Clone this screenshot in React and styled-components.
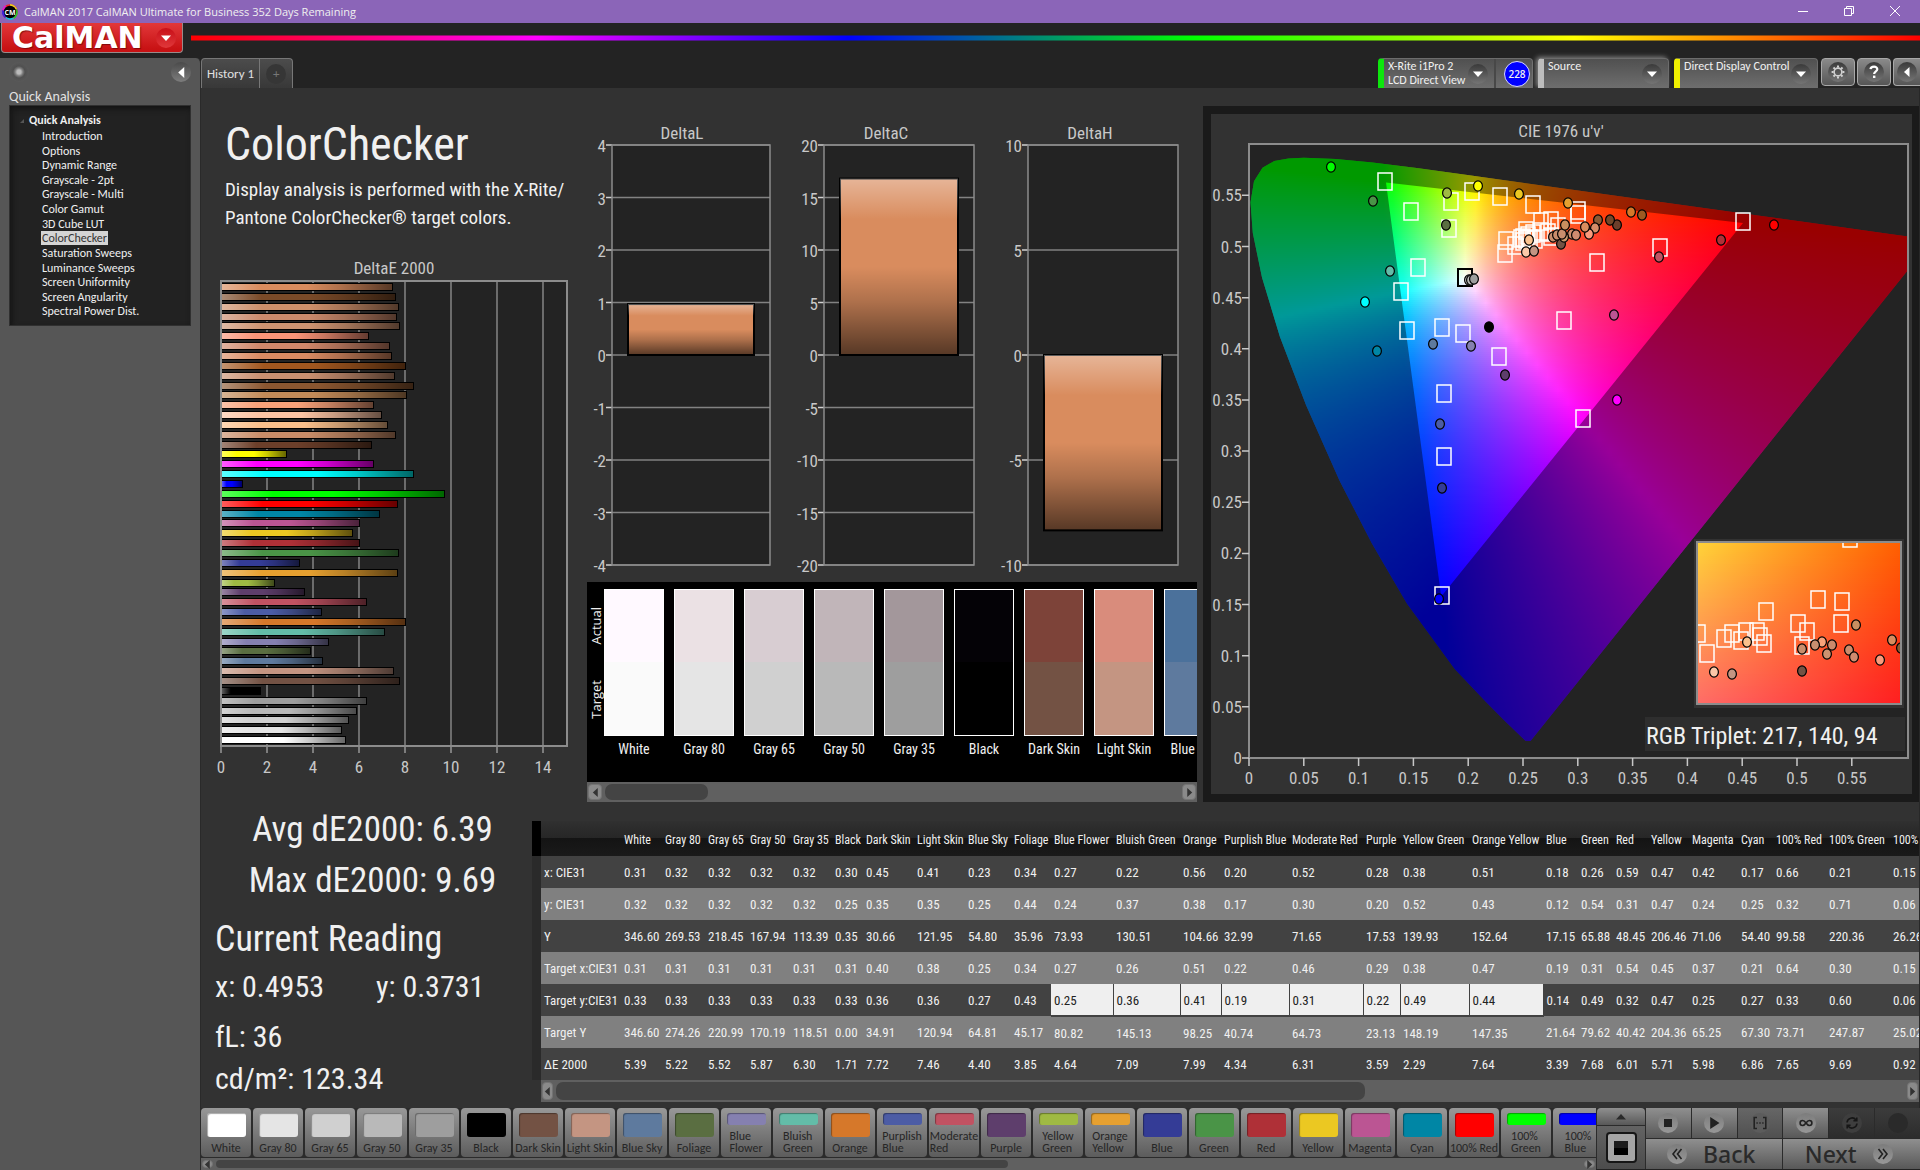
import React from "react";
import styled, { createGlobalStyle, css } from "styled-components";

const condensed = `"Roboto Condensed", "Open Sans", sans-serif`;
const ui = `Carlito, Calibri, Lato, sans-serif`;

/* ---------- data ---------- */

const steps = [
  "Introduction",
  "Options",
  "Dynamic Range",
  "Grayscale - 2pt",
  "Grayscale - Multi",
  "Color Gamut",
  "3D Cube LUT",
  "ColorChecker",
  "Saturation Sweeps",
  "Luminance Sweeps",
  "Screen Uniformity",
  "Screen Angularity",
  "Spectral Power Dist.",
];

// [dE2000, patch colour], top to bottom
const deltaE = [
  [7.45, "#d98c5e"],
  [7.58, "#7a4a28"],
  [7.7, "#cd8f6a"],
  [7.62, "#cb8a6c"],
  [7.75, "#cc9270"],
  [6.4, "#fa9478"],
  [7.32, "#d0876a"],
  [7.4, "#d98a62"],
  [8.0, "#a0561f"],
  [7.53, "#c98f70"],
  [8.36, "#8a5630"],
  [8.05, "#c28a58"],
  [6.6, "#f8a27a"],
  [6.97, "#fcc4a4"],
  [7.22, "#fbc08c"],
  [7.58, "#c88c68"],
  [6.53, "#6c3f2a"],
  [2.82, "#ffff00"],
  [6.61, "#ff00ff"],
  [8.36, "#00ffff"],
  [0.92, "#0000ff"],
  [9.69, "#00ff00"],
  [7.65, "#ff0000"],
  [6.86, "#0086a5"],
  [5.98, "#bb5593"],
  [5.71, "#ebc822"],
  [6.01, "#af3037"],
  [7.68, "#4a9447"],
  [3.39, "#343c96"],
  [7.64, "#e6a030"],
  [2.29, "#9fba43"],
  [3.59, "#5e3e6c"],
  [6.31, "#c15262"],
  [4.34, "#4c5ca5"],
  [7.99, "#d6782a"],
  [7.09, "#63bca8"],
  [4.64, "#8580b0"],
  [3.85, "#5a6e41"],
  [4.4, "#5e7a9e"],
  [7.46, "#c49582"],
  [7.72, "#735244"],
  [1.71, "#000000"],
  [6.3, "#9e9e9e"],
  [5.87, "#b9b9b9"],
  [5.52, "#d0d0d0"],
  [5.22, "#e5e5e5"],
  [5.39, "#ffffff"],
];

const deltaCharts = [
  { title: "DeltaL", max: 4, step: 1, value: 0.97, left: 21, inset: 16 },
  { title: "DeltaC", max: 20, step: 5, value: 16.8, left: 29, inset: 16 },
  { title: "DeltaH", max: 10, step: 5, value: -8.35, left: 29, inset: 16 },
];

const comparison = [
  { name: "White", actual: "#fff9ff", target: "#fafafa" },
  { name: "Gray 80", actual: "#ebe1e4", target: "#e5e5e5" },
  { name: "Gray 65", actual: "#d8cdd2", target: "#d0d0d0" },
  { name: "Gray 50", actual: "#c1b5b9", target: "#b9b9b9" },
  { name: "Gray 35", actual: "#a3979b", target: "#9e9e9e" },
  { name: "Black", actual: "#040206", target: "#000000" },
  { name: "Dark Skin", actual: "#7d4339", target: "#735244" },
  { name: "Light Skin", actual: "#d98c7c", target: "#c49582" },
  { name: "Blue Sky", actual: "#4b719b", target: "#5e7a9e" },
];

// name, column width, x, y, Y, target x, target y, target Y, dE
const readings = [
  ["White", 41, "0.31", "0.32", "346.60", "0.31", "0.33", "346.60", "5.39"],
  ["Gray 80", 43, "0.32", "0.32", "269.53", "0.31", "0.33", "274.26", "5.22"],
  ["Gray 65", 42, "0.32", "0.32", "218.45", "0.31", "0.33", "220.99", "5.52"],
  ["Gray 50", 43, "0.32", "0.32", "167.94", "0.31", "0.33", "170.19", "5.87"],
  ["Gray 35", 42, "0.32", "0.32", "113.39", "0.31", "0.33", "118.51", "6.30"],
  ["Black", 31, "0.30", "0.25", "0.35", "0.31", "0.33", "0.00", "1.71"],
  ["Dark Skin", 51, "0.45", "0.35", "30.66", "0.40", "0.36", "34.91", "7.72"],
  ["Light Skin", 51, "0.41", "0.35", "121.95", "0.38", "0.36", "120.94", "7.46"],
  ["Blue Sky", 46, "0.23", "0.25", "54.80", "0.25", "0.27", "64.81", "4.40"],
  ["Foliage", 40, "0.34", "0.44", "35.96", "0.34", "0.43", "45.17", "3.85"],
  ["Blue Flower", 62, "0.27", "0.24", "73.93", "0.27", "0.25", "80.82", "4.64"],
  ["Bluish Green", 67, "0.22", "0.37", "130.51", "0.26", "0.36", "145.13", "7.09"],
  ["Orange", 41, "0.56", "0.38", "104.66", "0.51", "0.41", "98.25", "7.99"],
  ["Purplish Blue", 68, "0.20", "0.17", "32.99", "0.22", "0.19", "40.74", "4.34"],
  ["Moderate Red", 74, "0.52", "0.30", "71.65", "0.46", "0.31", "64.73", "6.31"],
  ["Purple", 37, "0.28", "0.20", "17.53", "0.29", "0.22", "23.13", "3.59"],
  ["Yellow Green", 69, "0.38", "0.52", "139.93", "0.38", "0.49", "148.19", "2.29"],
  ["Orange Yellow", 74, "0.51", "0.43", "152.64", "0.47", "0.44", "147.35", "7.64"],
  ["Blue", 35, "0.18", "0.12", "17.15", "0.19", "0.14", "21.64", "3.39"],
  ["Green", 35, "0.26", "0.54", "65.88", "0.31", "0.49", "79.62", "7.68"],
  ["Red", 35, "0.59", "0.31", "48.45", "0.54", "0.32", "40.42", "6.01"],
  ["Yellow", 41, "0.47", "0.47", "206.46", "0.45", "0.47", "204.36", "5.71"],
  ["Magenta", 49, "0.42", "0.24", "71.06", "0.37", "0.25", "65.25", "5.98"],
  ["Cyan", 35, "0.17", "0.25", "54.40", "0.21", "0.27", "67.30", "6.86"],
  ["100% Red", 53, "0.66", "0.32", "99.58", "0.64", "0.33", "73.71", "7.65"],
  ["100% Green", 64, "0.21", "0.71", "220.36", "0.30", "0.60", "247.87", "9.69"],
  ["100% Blue", 60, "0.15", "0.06", "26.26", "0.15", "0.06", "25.02", "0.92"],
];
const rowLabels = [
  "x: CIE31",
  "y: CIE31",
  "Y",
  "Target x:CIE31",
  "Target y:CIE31",
  "Target Y",
  "ΔE 2000",
];
const isSelected = (row, col) => row === 4 && col >= 10 && col <= 17;

const patches = [
  ["White", "#ffffff"],
  ["Gray 80", "#e5e5e5"],
  ["Gray 65", "#d0d0d0"],
  ["Gray 50", "#b9b9b9"],
  ["Gray 35", "#9e9e9e"],
  ["Black", "#000000"],
  ["Dark Skin", "#735244"],
  ["Light Skin", "#c49582"],
  ["Blue Sky", "#5e7a9e"],
  ["Foliage", "#5a6e41"],
  ["Blue Flower", "#8580b0", true],
  ["Bluish Green", "#63bca8", true],
  ["Orange", "#d6782a"],
  ["Purplish Blue", "#4c5ca5", true],
  ["Moderate Red", "#c15262", true],
  ["Purple", "#5e3e6c"],
  ["Yellow Green", "#9fba43", true],
  ["Orange Yellow", "#e6a030", true],
  ["Blue", "#343c96"],
  ["Green", "#4a9447"],
  ["Red", "#af3037"],
  ["Yellow", "#ebc822"],
  ["Magenta", "#bb5593"],
  ["Cyan", "#0086a5"],
  ["100% Red", "#ff0000"],
  ["100% Green", "#00ff00", true],
  ["100% Blue", "#0000ff", true],
];

/* ---------- CIE chart data ---------- */

const U = 1096; // px per u'
const V = 1023; // px per v'
const PLOT_W = 659;
const PLOT_H = 614;
const px = (u) => u * U;
const py = (v) => PLOT_H - v * V;

const locus = [
  [0.2568, 0.0165], [0.2522, 0.0169], [0.2347, 0.035], [0.2161, 0.0549],
  [0.1877, 0.0871], [0.1441, 0.151], [0.112, 0.21], [0.0828, 0.2708],
  [0.052, 0.345], [0.0282, 0.4117], [0.0119, 0.4698], [0.0035, 0.5131],
  [0.0014, 0.5432], [0.0046, 0.5638], [0.0123, 0.577], [0.0231, 0.5837],
  [0.036, 0.5861], [0.0501, 0.5868], [0.0792, 0.5856], [0.1127, 0.5821],
  [0.1531, 0.5766], [0.2026, 0.5694], [0.2623, 0.5604], [0.3315, 0.5501],
  [0.4035, 0.5393], [0.4692, 0.5296], [0.5203, 0.5219], [0.583, 0.5125],
  [0.6234, 0.5065],
];
const gamut = [[0.4507, 0.5229], [0.125, 0.5625], [0.1754, 0.1579]];
const toPath = (pts) =>
  "M" + pts.map(([u, v]) => `${px(u).toFixed(1)} ${py(v).toFixed(1)}`).join("L") + "Z";

const targets = [
  [136, 37], [162, 67], [202, 57], [223, 47], [251, 52], [284, 60], [200, 84],
  [169, 123], [152, 147], [158, 186], [193, 183], [214, 189], [250, 212],
  [195, 249], [315, 176], [348, 118], [411, 103], [494, 77], [334, 274],
  [195, 312], [193, 451], [329, 66], [329, 70], [292, 77], [302, 76], [309, 82],
  [277, 86], [257, 96], [256, 109], [266, 101], [272, 94], [274, 93], [279, 91],
  [281, 94], [286, 95], [284, 89], [292, 87], [299, 88], [302, 92], [277, 95],
  [274, 97],
];
const measured = [
  [82, 23, "#00ff00"], [124, 57, "#4a9447"], [198, 49, "#9fba43"],
  [229, 42, "#ffff00"], [270, 50, "#ebc822"], [319, 59, "#e6a030"],
  [197, 81, "#5a6e41"], [141, 127, "#63bca8"], [116, 158, "#00ffff"],
  [128, 207, "#0086a5"], [184, 200, "#5e7a9e"], [222, 202, "#8580b0"],
  [256, 231, "#5e3e6c"], [240, 183, "#000000"], [365, 171, "#bb5593"],
  [368, 256, "#ff00ff"], [472, 96, "#af3037"], [525, 81, "#ff0000"],
  [410, 113, "#c15262"], [220, 136, "#d0d0d0"], [222, 136, "#b9b9b9"],
  [225, 135, "#9e9e9e"], [191, 280, "#4c5ca5"], [193, 344, "#343c96"],
  [190, 455, "#0000ff"], [382, 68, "#d6782a"], [393, 71, "#9c5a22"],
  [349, 76, "#8b5a35"], [368, 81, "#6b3f2b"], [361, 76, "#74482a"],
  [346, 84, "#d88d68"], [340, 90, "#fb9a7c"], [336, 83, "#d98c5e"],
  [323, 90, "#cd8c6c"], [327, 91, "#d08b6f"], [312, 100, "#735244"],
  [315, 93, "#cc9a6e"], [304, 93, "#c88e6c"], [308, 91, "#c98d6b"],
  [313, 90, "#c98e6d"], [316, 81, "#c88f60"], [277, 108, "#fcc8a8"],
  [285, 107, "#c49582"], [280, 96, "#fcc390"],
];

const insetTargets = [
  [153, -4], [121, 57], [145, 59], [69, 69], [101, 81], [144, 81], [110, 89],
  [105, 103], [1, 91], [10, 111], [27, 96], [35, 91], [44, 98], [49, 89],
  [60, 89], [63, 94], [67, 101],
];
const insetMeasured = [
  [159, 83, "#c88f60"], [195, 98, "#d98c5e"], [204, 106, "#8b5a35"],
  [183, 118, "#fb9a7c"], [152, 108, "#cd8c6c"], [157, 115, "#d08b6f"],
  [135, 103, "#cb8a6c"], [125, 100, "#f8a27a"], [118, 103, "#c98f70"],
  [130, 112, "#cc9270"], [105, 107, "#c88e6c"], [105, 129, "#735244"],
  [50, 100, "#fbc08c"], [17, 130, "#fcc8a8"], [35, 132, "#c49582"],
];

// chromaticity to the brightest display colour that has it
const chromaColor = (x, y) => {
  const u = x / U;
  const v = Math.max((PLOT_H - y) / V, 0.01);
  const d = 6 * u - 16 * v + 12;
  const cx = (9 * u) / d;
  const cy = (4 * v) / d;
  const X = cx / cy;
  const Z = (1 - cx - cy) / cy;
  const lin = [
    3.2406 * X - 1.5372 - 0.4986 * Z,
    -0.9689 * X + 1.8758 + 0.0415 * Z,
    0.0557 * X - 0.204 + 1.057 * Z,
  ].map((c) => Math.max(c, 0));
  const top = Math.max(...lin);
  return lin.map((c) => Math.round(255 * Math.pow(c / top, 0.85)));
};

const corners = [[255, 212, 56], [255, 95, 0], [255, 108, 104], [255, 30, 32]];
const insetColor = (x, y) => {
  const s = x / 204;
  const t = y / 162;
  return [0, 1, 2].map((i) =>
    Math.round(
      (corners[0][i] * (1 - s) + corners[1][i] * s) * (1 - t) +
        (corners[2][i] * (1 - s) + corners[3][i] * s) * t
    )
  );
};

// Two-dimensional colour field, painted as thin rows of horizontal gradients.
const ColorField = ({ id, width, height, row, stops, color }) => {
  const rows = Array.from({ length: Math.ceil(height / row) }, (_, i) => i * row);
  return (
    <g shapeRendering="crispEdges">
      <defs>
        {rows.map((y) => (
          <linearGradient key={y} id={`${id}${y}`}>
            {Array.from({ length: stops + 1 }, (_, i) => (
              <stop
                key={i}
                offset={i / stops}
                stopColor={`rgb(${color((i / stops) * width, y + row / 2)})`}
              />
            ))}
          </linearGradient>
        ))}
      </defs>
      {rows.map((y) => (
        <rect key={y} y={y} width={width} height={row} fill={`url(#${id}${y})`} />
      ))}
    </g>
  );
};

const Markers = ({ squares, dots }) => (
  <>
    {squares.map(([x, y], i) => (
      <rect
        key={i}
        x={x - 7}
        y={y - 8}
        width="14"
        height="17"
        fill="none"
        stroke="#fff"
        strokeWidth="1.5"
      />
    ))}
    {dots.map(([x, y, c], i) => (
      <ellipse key={i} cx={x} cy={y} rx="4.4" ry="5.2" fill={c} stroke="#000" strokeWidth="1.2" />
    ))}
  </>
);

/* ---------- charts ---------- */

const ChartSvg = styled.svg`
  display: block;
  width: 100%;
  height: auto;
  font-family: ${condensed};
  font-size: 17px;
  fill: #c8c8c8;
`;

const CieChart = () => {
  const ticks = Array.from({ length: 12 }, (_, i) => i * 0.05);
  const label = (t) => String(Number(t.toFixed(2)));
  return (
    <ChartSvg viewBox="0 0 701 680" role="img" aria-label="CIE 1976 u'v' chart">
      <text x="350" y="23" textAnchor="middle">
        CIE 1976 u'v'
      </text>
      <g transform="translate(38 30)">
        <rect width={PLOT_W} height={PLOT_H} fill="#232323" />
        <clipPath id="locus">
          <path d={toPath(locus)} />
        </clipPath>
        <clipPath id="plot">
          <rect width={PLOT_W} height={PLOT_H} />
        </clipPath>
        <g clipPath="url(#plot)">
          <g clipPath="url(#locus)">
            <ColorField
              id="cie"
              width={PLOT_W}
              height={PLOT_H}
              row={2}
              stops={64}
              color={chromaColor}
            />
            <path
              d={`M0 0H${PLOT_W}V${PLOT_H}H0Z${toPath(gamut)}`}
              fillRule="evenodd"
              fill="#000"
              fillOpacity="0.4"
            />
          </g>
        </g>
        <rect width={PLOT_W} height={PLOT_H} fill="none" stroke="#8c8c8c" strokeWidth="2" />
        <Markers squares={targets} dots={[]} />
        <rect x="209" y="125" width="14" height="17" fill="none" stroke="#000" strokeWidth="2" />
        <Markers squares={[]} dots={measured} />
        {ticks.map((t) => (
          <g key={t}>
            <path
              d={`M-7 ${py(t)}H0M${px(t)} ${PLOT_H}V${PLOT_H + 8}`}
              stroke="#c8c8c8"
              strokeWidth="1.5"
            />
            <text x="-7" y={py(t) + 6} textAnchor="end">
              {label(t)}
            </text>
            <text x={px(t)} y={PLOT_H + 26} textAnchor="middle">
              {label(t)}
            </text>
          </g>
        ))}
        <g transform="translate(448 398)">
          <rect x="-3" y="-3" width="210" height="169" fill="#323232" />
          <clipPath id="inset">
            <rect width="204" height="162" />
          </clipPath>
          <g clipPath="url(#inset)">
            <ColorField
              id="zoom"
              width={204}
              height={162}
              row={2}
              stops={8}
              color={insetColor}
            />
            <Markers squares={insetTargets} dots={insetMeasured} />
          </g>
          <rect width="204" height="162" fill="none" stroke="#8c8c8c" strokeWidth="2" />
        </g>
        <rect x="396" y="573" width="260" height="34" fill="#2e2e2e" />
        <text x="397" y="600" fontSize="24" fill="#f0f0f0">
          RGB Triplet: 217, 140, 94
        </text>
      </g>
    </ChartSvg>
  );
};

const Shade = ({ id, vertical }) => (
  <linearGradient id={id} x2={vertical ? 0 : 1} y2={vertical ? 1 : 0}>
    <stop offset="0" stopColor="#fff" stopOpacity="0.36" />
    <stop offset="0.23" stopColor="#fff" stopOpacity="0" />
    <stop offset="0.5" stopColor="#000" stopOpacity="0" />
    <stop offset="0.7" stopColor="#000" stopOpacity="0.2" />
    <stop offset="1" stopColor="#000" stopOpacity="0.6" />
  </linearGradient>
);

const DeltaEChart = () => {
  const pitch = 463 / deltaE.length;
  return (
    <ChartSvg viewBox="0 0 374 526" role="img" aria-label="DeltaE 2000 chart">
      <defs>
        <Shade id="shadeH" />
      </defs>
      <text x="187" y="16" textAnchor="middle">
        DeltaE 2000
      </text>
      <rect x="14" y="23" width="346" height="465" fill="#232323" stroke="#8c8c8c" strokeWidth="2" />
      {[2, 4, 6, 8, 10, 12, 14].map((t) => (
        <path key={t} d={`M${14 + t * 23} 23v465`} stroke="#8c8c8c" strokeWidth="1.4" />
      ))}
      {deltaE.map(([value, color], i) => {
        const y = Math.round(25 + i * pitch);
        const width = Math.round(value * 23);
        return (
          <g key={i}>
            <rect x="15" y={y} width={width} height="8" fill="#000" />
            <rect x="15" y={y + 1} width={width - 1} height="6" fill={color} />
            <rect x="15" y={y + 1} width={width - 1} height="6" fill="url(#shadeH)" />
          </g>
        );
      })}
      {[0, 2, 4, 6, 8, 10, 12, 14].map((t) => (
        <g key={t}>
          <path d={`M${14 + t * 23} 489v6`} stroke="#c8c8c8" />
          <text x={14 + t * 23} y="515" textAnchor="middle">
            {t}
          </text>
        </g>
      ))}
    </ChartSvg>
  );
};

const DeltaChart = ({ title, max, step, value, left, inset }) => {
  const right = 179;
  const top = 25;
  const half = 210;
  const y = (v) => top + half - (v / max) * half;
  const ticks = [];
  for (let t = max; t >= -max; t -= step) ticks.push(t);
  const box = {
    x: left + inset,
    y: Math.min(y(0), y(value)),
    width: right - left - inset * 2,
    height: Math.abs(y(value) - y(0)),
  };
  return (
    <ChartSvg viewBox="0 0 180 462" role="img" aria-label={`${title} chart`}>
      <defs>
        <Shade id="shadeV" vertical />
      </defs>
      <text x="91" y="19" textAnchor="middle">
        {title}
      </text>
      <rect x={left} y={top} width={right - left} height={half * 2} fill="#232323" />
      {ticks.map((t) => (
        <g key={t}>
          <path d={`M${left} ${y(t)}H${right}`} stroke="#828282" strokeWidth="1.5" />
          <path d={`M${left - 6} ${y(t)}h6`} stroke="#d0d0d0" strokeWidth="1.5" />
          <text x={left - 6} y={y(t) + 7} textAnchor="end">
            {t}
          </text>
        </g>
      ))}
      <rect
        x={left}
        y={top}
        width={right - left}
        height={half * 2}
        fill="none"
        stroke="#8c8c8c"
        strokeWidth="1.5"
      />
      <rect {...box} fill="#d98c5e" stroke="#000" strokeWidth="2" />
      <rect {...box} fill="url(#shadeV)" />
    </ChartSvg>
  );
};

/* ---------- shared controls ---------- */

const Global = createGlobalStyle`
  * { box-sizing: border-box; }
  body {
    margin: 0;
    background: #232323;
    color: #f0f0f0;
    font-family: ${ui};
    font-size: 12px;
    overflow: hidden;
  }
  button { font: inherit; color: inherit; border: 0; padding: 0; background: none; }
  a { color: inherit; text-decoration: none; }
`;

const Disc = styled.span`
  display: flex;
  flex: none;
  align-items: center;
  justify-content: center;
  width: 20px;
  height: 20px;
  border-radius: 50%;
  background: ${({ $bg }) => $bg || "linear-gradient(#3a3a3a, #757575)"};
`;

const Arrow = ({ dir = "down", size = 10, color = "#fff" }) => {
  const turn = { down: 0, left: 90, up: 180, right: 270 }[dir];
  return (
    <svg width={size} height={size} viewBox="0 0 10 10" aria-hidden="true">
      <path d="M0 2.5H10L5 8Z" fill={color} transform={`rotate(${turn} 5 5)`} />
    </svg>
  );
};

const Scroll = styled.div`
  display: flex;
  align-items: stretch;
  gap: 3px;
  height: ${({ $h }) => $h}px;
  padding: 2px 1px;
  background: #606060;
`;
const ScrollEnd = styled.button`
  display: flex;
  flex: 0 0 ${({ $w }) => $w || 14}px;
  align-items: center;
  justify-content: center;
  border-radius: 4px;
  background: #8a8a8a;
  border: 1px solid #747474;
`;
const ScrollTrack = styled.div`
  flex: 1;
  display: flex;
`;
const ScrollThumb = styled.div`
  width: ${({ $w }) => $w}%;
  border-radius: 7px;
  background: #444;
`;

const ScrollBar = ({ height, thumb, end }) => (
  <Scroll $h={height}>
    <ScrollEnd $w={end} aria-label="Scroll left">
      <Arrow dir="left" size={9} color="#333" />
    </ScrollEnd>
    <ScrollTrack>
      <ScrollThumb $w={thumb} />
    </ScrollTrack>
    <ScrollEnd $w={end} aria-label="Scroll right">
      <Arrow dir="right" size={9} color="#333" />
    </ScrollEnd>
  </Scroll>
);

/* ---------- frame ---------- */

const Window = styled.div`
  display: flex;
  flex-direction: column;
  min-height: 100vh;
`;
const TitleBar = styled.header`
  display: flex;
  align-items: center;
  gap: 6px;
  height: 23px;
  padding-left: 2px;
  background: #8b65b8;
  font-family: "Open Sans", "Noto Sans", sans-serif;
  font-size: 11px;
`;
const WindowButtons = styled.div`
  display: flex;
  margin-left: auto;
  padding-right: 2px;
`;
const WindowButton = styled.button`
  width: 46px;
  height: 23px;
`;

const Brand = styled.div`
  display: flex;
  height: 35px;
  gap: 8px;
`;
const Logo = styled.button`
  display: flex;
  align-items: center;
  justify-content: space-between;
  width: 182px;
  height: 30px;
  margin-left: 1px;
  padding: 0 6px 0 10px;
  border: solid #9a8a8a;
  border-width: 0 1px 1px;
  border-radius: 0 0 4px 4px;
  background: linear-gradient(#e2383a, #c81214 90%);
  color: #fff;
  font-family: "DejaVu Sans", sans-serif;
  font-size: 30px;
  font-weight: 700;
  line-height: 29px;
  text-shadow: 1px 1px 1px rgba(80, 0, 0, 0.6);
`;
const Spectrum = styled.div`
  flex: 1;
  height: 6px;
  margin-top: 12px;
  border: solid rgba(35, 35, 35, 0.5);
  border-width: 1px 0;
  background: linear-gradient(
    to right,
    #f00,
    #f0f 20%,
    #00f 38%,
    #0f0 58%,
    #ff0 80%,
    #f00
  );
`;

const Body = styled.div`
  display: flex;
  flex: 1;
`;
const Sidebar = styled.nav`
  flex: 0 0 201px;
  padding: 4px 9px;
  border-right: 1px solid #2a2a2a;
  border-top-right-radius: 5px;
  background: #565656;
`;
const SidebarTools = styled.div`
  display: flex;
  justify-content: space-between;
`;
const SidebarTitle = styled.h2`
  margin: 6px 0 0;
  font-size: 14px;
  line-height: 17px;
  font-weight: 400;
  color: #e2e2e2;
`;
const Tree = styled.div`
  height: 221px;
  padding: 7px 0 8px 10px;
  border: 1px solid #303030;
  background: #222;
  box-shadow: inset 0 5px 6px -3px #111, inset 5px 0 6px -4px #151515;
`;
const TreeRoot = styled.div`
  display: flex;
  align-items: center;
  gap: 5px;
  font-weight: 700;
  line-height: 15px;
  padding-bottom: 1px;
`;
const TreeList = styled.ul`
  display: grid;
  grid-auto-rows: 1fr;
  height: 190px;
  margin: 0;
  padding: 0 0 0 21px;
  list-style: none;
`;
const TreeLink = styled.a`
  display: inline-block;
  padding: 0 1px;
  line-height: 14px;
  ${({ $active }) =>
    $active &&
    css`
      background: #d4d4d4;
      color: #333;
    `}
`;

const Main = styled.main`
  flex: 1;
  display: flex;
  flex-direction: column;
  min-width: 0;
`;
const TabBar = styled.div`
  display: flex;
  justify-content: space-between;
  height: 30px;
`;
const Tabs = styled.div`
  display: flex;
  border: 1px solid #777;
  border-bottom: 0;
  border-radius: 4px 4px 0 0;
  background: linear-gradient(#4c4c4c, #383838);
`;
const Tab = styled.button`
  display: flex;
  align-items: center;
  padding: 0 5px;
  font-size: 13px;
  color: #e0e0e0;
  & + & {
    padding: 0 6px;
    border-left: 1px solid #777;
    color: #777;
  }
`;
const Devices = styled.div`
  display: flex;
`;
const Device = styled.div`
  display: flex;
  width: ${({ $w }) => $w}px;
  margin-right: ${({ $gap }) => $gap}px;
  border: 1px solid #6c6c6c;
  border-bottom: 0;
  border-left: 6px solid ${({ $accent }) => $accent};
  border-radius: 4px 4px 0 0;
  background: linear-gradient(#505050, #6e6e6e);
  ${({ $glow }) => $glow && "box-shadow: -2px -1px 5px rgba(255, 255, 255, 0.45);"}
`;
const DeviceButton = styled.button`
  flex: 1;
  display: flex;
  align-items: center;
  justify-content: space-between;
  padding: 0 6px 0 4px;
  text-align: left;
  line-height: 14px;
`;
const DeviceName = styled.span`
  align-self: flex-start;
  white-space: nowrap;
`;
const MeterCount = styled.span`
  display: flex;
  align-items: center;
  padding: 0 2px 0 8px;
  border-left: 2px solid #484848;
`;
const Count = styled.span`
  width: 26px;
  height: 26px;
  border: 1px solid #d8d8ff;
  border-radius: 50%;
  background: #00f;
  font: 600 10px/24px "Open Sans", sans-serif;
  text-align: center;
`;
const ToolButton = styled.button`
  display: flex;
  align-items: center;
  justify-content: center;
  width: 34px;
  height: 28px;
  margin-right: 2px;
  border: 1px solid #a8a8a8;
  border-radius: 4px;
  background: linear-gradient(#8a8a8a, #565656);
  &:last-child {
    width: 27px;
    margin-right: 0;
    border-right: 0;
    border-radius: 4px 0 0 4px;
  }
`;

/* ---------- workspace ---------- */

const Workspace = styled.div`
  flex: 1;
  background: #323232;
  border-right: 1px solid #282828;
`;
const TopRow = styled.section`
  display: flex;
  height: 714px;
`;
const Overview = styled.div`
  flex: 0 0 386px;
`;
const Heading = styled.h1`
  margin: 28px 0 0 24px;
  font: 400 46px/56px ${condensed};
`;
const Intro = styled.p`
  margin: 4px 0 26px 24px;
  font: 400 19px/28px ${condensed};
  white-space: nowrap;
`;
const DeltaEBox = styled.div`
  width: 374px;
  margin-left: 6px;
`;
const Deltas = styled.div`
  flex: 0 0 610px;
  min-width: 0;
  padding-top: 32px;
`;
const DeltaRow = styled.div`
  display: grid;
  grid-template-columns: repeat(3, 180px);
  gap: 24px;
  padding-left: 4px;
`;
const Compare = styled.div`
  display: flex;
  height: 200px;
  padding-top: 7px;
  background: #000;
  overflow: hidden;
`;
const Sides = styled.div`
  display: flex;
  flex: 0 0 17px;
  flex-direction: column;
  justify-content: space-around;
  align-items: center;
  height: 147px;
  font: 400 13px/16px "Open Sans", sans-serif;
`;
const Side = styled.span`
  writing-mode: sideways-lr;
`;
const CompareItem = styled.figure`
  flex: 0 0 60px;
  margin: 0 10px 0 0;
`;
const CompareSwatch = styled.div`
  height: 147px;
  border: 1px solid #fff;
  background: linear-gradient(
    ${({ $actual }) => $actual} 50%,
    ${({ $target }) => $target} 50%
  );
`;
const CompareName = styled.figcaption`
  margin: 4px -5px 0;
  font: 400 14px/18px ${condensed};
  text-align: center;
  white-space: nowrap;
`;
const CiePanel = styled.div`
  flex: 1;
  margin: 18px 0 0 6px;
  border: 8px solid #1a1a1a;
  border-right-width: 7px;
`;

const BottomRow = styled.section`
  display: flex;
  height: 306px;
`;
const Stats = styled.div`
  flex: 0 0 331px;
  padding: 2px 0 0 14px;
  font-family: ${condensed};
`;
const Stat = styled.p`
  margin: 0 0 0 -14px;
  padding-left: 12px;
  font-size: 35px;
  line-height: 51px;
  text-align: center;
`;
const ReadingTitle = styled.h2`
  margin: 9px 0 0;
  font-size: 36px;
  font-weight: 400;
  line-height: 48px;
`;
const Reading = styled.p`
  display: flex;
  margin: 0;
  font-size: 30px;
  line-height: ${({ $line }) => $line}px;
`;
const ReadingValue = styled.span`
  width: 161px;
`;

const TableBox = styled.div`
  flex: 1;
  min-width: 0;
  margin-top: 19px;
`;
const TableClip = styled.div`
  overflow: hidden;
`;
const Table = styled.table`
  table-layout: fixed;
  width: 100px;
  border-collapse: collapse;
  font: 400 13px/16px ${condensed};
  text-align: left;
  white-space: nowrap;
`;
const HeadRow = styled.tr`
  height: 35px;
  background: linear-gradient(#303030, #262626 50%, #141414 50%, #1a1a1a);
  font-size: 12px;
`;
const DataRow = styled.tr`
  height: 32px;
  background: #424242;
  &:nth-child(even) {
    background: #808080;
  }
`;
const Grip = styled.td`
  padding: 0;
  background: ${({ $head }) => ($head ? "#000" : "#2a2a2a")};
`;
const Th = styled.th`
  padding: 2px 0 0 3px;
  font-weight: 400;
`;
const Td = styled.td`
  padding: 2px 0 0 3px;
  ${({ $selected }) =>
    $selected &&
    css`
      border-right: 1px solid #424242;
      border-bottom: 2px solid #424242;
      background: #efefef;
      color: #222;
    `}
`;
const TableScroll = styled.div`
  margin-left: 9px;
`;

/* ---------- bottom bar ---------- */

const Footer = styled.footer`
  display: flex;
  height: 62px;
  background: #2b2b2b;
  border-bottom: 1px solid #222;
`;
const PatchArea = styled.div`
  flex: 1;
  min-width: 0;
`;
const PatchRow = styled.div`
  display: flex;
  gap: 2px;
  height: 50px;
  overflow: hidden;
`;
const Patch = styled.button`
  flex: 0 0 50px;
  display: flex;
  flex-direction: column;
  align-items: center;
  justify-content: space-between;
  height: 49px;
  padding: 5px 0 3px;
  border-radius: 4px;
  background: linear-gradient(#989898, #5c5c5c);
  color: #262626;
  line-height: 12px;
`;
const Chip = styled.span`
  flex: none;
  width: 39px;
  height: ${({ $short }) => ($short ? 12 : 24)}px;
  border-radius: 3px;
  background: ${({ $color }) => $color};
  box-shadow: inset 1px 1px 1px rgba(0, 0, 0, 0.35);
`;
const PatchName = styled.span`
  width: ${({ $wrap }) => ($wrap ? "min-content" : "auto")};
  text-align: left;
  white-space: ${({ $wrap }) => ($wrap ? "normal" : "nowrap")};
`;

const PatternBox = styled.div`
  display: flex;
  flex: 0 0 48px;
  flex-direction: column;
  margin: 0 1px;
  gap: 1px;
`;
const metal = css`
  display: flex;
  align-items: center;
  justify-content: center;
  background: linear-gradient(#8f8f8f, #585858);
`;
const PatternUp = styled.button`
  ${metal}
  height: 17px;
  border-radius: 4px 4px 0 0;
`;
const Pattern = styled.button`
  ${metal}
  flex: 1;
  background: linear-gradient(#636363, #4c4c4c);
`;
const PatternFace = styled.span`
  display: flex;
  align-items: center;
  justify-content: center;
  width: 31px;
  height: 31px;
  border: 2px solid #161616;
  border-radius: 4px;
  background: #a5a5a5;
`;
const PatternSquare = styled.span`
  width: 14px;
  height: 14px;
  background: linear-gradient(#1c1c1c 50%, #000 50%);
`;

const Transport = styled.div`
  display: grid;
  flex: 0 0 274px;
  grid-template-columns: repeat(6, 1fr);
  grid-template-rows: 30px 30px;
  gap: 1px;
`;
const Key = styled.button`
  ${metal}
  ${({ $off }) => $off && "background: linear-gradient(#3c3c3c, #2c2c2c);"}
  ${({ $dim }) => $dim && "background: linear-gradient(#666, #505050);"}
`;
const PageKey = styled.button`
  ${metal}
  grid-column: span 3;
  gap: 16px;
  padding-right: 6px;
  font: 500 23px/30px "Noto Sans", sans-serif;
  color: #2a2a2a;
`;

const keyDisc = "linear-gradient(#7c7c7c, #989898)";
const Glyph = ({ d, color = "#222", fill = "none" }) => (
  <svg width="14" height="14" viewBox="0 0 14 14" aria-hidden="true">
    <path d={d} fill={fill} stroke={color} strokeWidth="1.6" />
  </svg>
);

/* ---------- page ---------- */

const ReadingsTable = () => (
  <TableBox>
    <TableClip>
      <Table>
        <colgroup>
          <col style={{ width: 9 }} />
          <col style={{ width: 80 }} />
          {readings.map(([name, width]) => (
            <col key={name} style={{ width }} />
          ))}
        </colgroup>
        <thead>
          <HeadRow>
            <Grip $head />
            <Th />
            {readings.map(([name]) => (
              <Th key={name} scope="col">
                {name}
              </Th>
            ))}
          </HeadRow>
        </thead>
        <tbody>
          {rowLabels.map((label, row) => (
            <DataRow key={label}>
              <Grip />
              <Th scope="row">{label}</Th>
              {readings.map((r, col) => (
                <Td key={r[0]} $selected={isSelected(row, col)}>
                  {r[row + 2]}
                </Td>
              ))}
            </DataRow>
          ))}
        </tbody>
      </Table>
    </TableClip>
    <TableScroll>
      <ScrollBar height={22} thumb={60} end={11} />
    </TableScroll>
  </TableBox>
);

const AppIcon = () => (
  <svg width="16" height="16" viewBox="0 0 16 16" aria-hidden="true">
    <circle cx="8" cy="8" r="7.8" fill="#e22" />
    <path d="M8 8L8 0A8 8 0 0 1 15 5Z" fill="#ec2" />
    <path d="M8 8L15 5A8 8 0 0 1 12 15Z" fill="#2c3" />
    <path d="M8 8L12 15A8 8 0 0 1 3 14Z" fill="#2bd" />
    <path d="M8 8L3 14A8 8 0 0 1 0 6Z" fill="#42d" />
    <path d="M8 8L0 6A8 8 0 0 1 3 1Z" fill="#d2c" />
    <circle cx="8" cy="8" r="6.2" fill="#000" />
    <text x="8" y="10.6" fontSize="7" fontWeight="700" fontFamily="Open Sans" fill="#fff" textAnchor="middle">
      CM
    </text>
  </svg>
);

const GearIcon = () => (
  <svg width="14" height="14" viewBox="0 0 14 14" aria-hidden="true">
    <circle cx="7" cy="7" r="3.9" fill="none" stroke="#d2d2d2" strokeWidth="1.6" />
    {[0, 45, 90, 135, 180, 225, 270, 315].map((a) => (
      <path key={a} d="M7 0.6V2.6" stroke="#d2d2d2" strokeWidth="2" transform={`rotate(${a} 7 7)`} />
    ))}
  </svg>
);

const HelpIcon = () => (
  <svg width="12" height="14" viewBox="0 0 12 14" aria-hidden="true">
    <path
      d="M2.5 4.2C2.8 0.8 9.4 0.8 9.3 4.2C9.2 6.4 6.2 6.2 6.1 9"
      fill="none"
      stroke="#fff"
      strokeWidth="2.2"
    />
    <rect x="5" y="10.6" width="2.4" height="2.4" fill="#fff" />
  </svg>
);

export default function App() {
  return (
    <Window>
      <Global />
      <TitleBar>
        <AppIcon />
        CalMAN 2017 CalMAN Ultimate for Business 352 Days Remaining
        <WindowButtons>
          <WindowButton aria-label="Minimize">
            <svg width="10" height="10" viewBox="0 0 10 10">
              <path d="M0 5.5H10" stroke="#fff" />
            </svg>
          </WindowButton>
          <WindowButton aria-label="Restore">
            <svg width="10" height="10" viewBox="0 0 10 10">
              <path d="M0.5 2.5H7.5V9.5H0.5ZM2.5 2.5V0.5H9.5V7.5H7.5" fill="none" stroke="#fff" />
            </svg>
          </WindowButton>
          <WindowButton aria-label="Close">
            <svg width="10" height="10" viewBox="0 0 10 10">
              <path d="M0 0L10 10M10 0L0 10" stroke="#fff" />
            </svg>
          </WindowButton>
        </WindowButtons>
      </TitleBar>

      <Brand>
        <Logo>
          CalMAN
          <Disc $bg="linear-gradient(#c80f18, #e0383a)">
            <Arrow size={10} />
          </Disc>
        </Logo>
        <Spectrum />
      </Brand>

      <Body>
        <Sidebar>
          <SidebarTools>
            <Disc $bg="radial-gradient(circle at 50% 50%, #bbb 0 2px, #7a7a7a 4px, #505050 6px, #626262)" />
            <Disc as="button" $bg="linear-gradient(#4a4a4a, #7d7d7d)" aria-label="Collapse">
              <Arrow dir="left" size={11} />
            </Disc>
          </SidebarTools>
          <SidebarTitle>Quick Analysis</SidebarTitle>
          <Tree>
            <TreeRoot>
              <svg width="4" height="4" viewBox="0 0 4 4" aria-hidden="true">
                <path d="M4 0V4H0Z" fill="#555" />
              </svg>
              Quick Analysis
            </TreeRoot>
            <TreeList>
              {steps.map((s) => (
                <li key={s}>
                  <TreeLink href="#" $active={s === "ColorChecker"}>
                    {s}
                  </TreeLink>
                </li>
              ))}
            </TreeList>
          </Tree>
        </Sidebar>

        <Main>
          <TabBar>
            <Tabs>
              <Tab>History 1</Tab>
              <Tab aria-label="Add tab">
                <Disc $bg="#363636">+</Disc>
              </Tab>
            </Tabs>
            <Devices>
              <Device $w={155} $gap={5} $accent="#0de60d">
                <DeviceButton>
                  <DeviceName>
                    X-Rite i1Pro 2<br />
                    LCD Direct View
                  </DeviceName>
                  <Disc>
                    <Arrow />
                  </Disc>
                </DeviceButton>
                <MeterCount>
                  <Count>228</Count>
                </MeterCount>
              </Device>
              <Device $w={131} $gap={5} $accent="#bdbdbd" $glow>
                <DeviceButton>
                  <DeviceName>Source</DeviceName>
                  <Disc>
                    <Arrow />
                  </Disc>
                </DeviceButton>
              </Device>
              <Device $w={144} $gap={3} $accent="#f0f000">
                <DeviceButton>
                  <DeviceName>Direct Display Control</DeviceName>
                  <Disc>
                    <Arrow />
                  </Disc>
                </DeviceButton>
              </Device>
              <ToolButton aria-label="Settings">
                <Disc>
                  <GearIcon />
                </Disc>
              </ToolButton>
              <ToolButton aria-label="Help">
                <Disc>
                  <HelpIcon />
                </Disc>
              </ToolButton>
              <ToolButton aria-label="Collapse">
                <Disc>
                  <Arrow dir="left" />
                </Disc>
              </ToolButton>
            </Devices>
          </TabBar>

          <Workspace>
            <TopRow>
              <Overview>
                <Heading>ColorChecker</Heading>
                <Intro>
                  Display analysis is performed with the X-Rite/
                  <br />
                  Pantone ColorChecker® target colors.
                </Intro>
                <DeltaEBox>
                  <DeltaEChart />
                </DeltaEBox>
              </Overview>
              <Deltas>
                <DeltaRow>
                  {deltaCharts.map((c) => (
                    <DeltaChart key={c.title} {...c} />
                  ))}
                </DeltaRow>
                <Compare>
                  <Sides>
                    <Side>Actual</Side>
                    <Side>Target</Side>
                  </Sides>
                  {comparison.map((c) => (
                    <CompareItem key={c.name}>
                      <CompareSwatch $actual={c.actual} $target={c.target} />
                      <CompareName>{c.name}</CompareName>
                    </CompareItem>
                  ))}
                </Compare>
                <ScrollBar height={20} thumb={18} />
              </Deltas>
              <CiePanel>
                <CieChart />
              </CiePanel>
            </TopRow>

            <BottomRow>
              <Stats>
                <Stat>Avg dE2000: 6.39</Stat>
                <Stat>Max dE2000: 9.69</Stat>
                <ReadingTitle>Current Reading</ReadingTitle>
                <Reading $line={48}>
                  <ReadingValue>x: 0.4953</ReadingValue>
                  <span>y: 0.3731</span>
                </Reading>
                <Reading $line={52}>fL: 36</Reading>
                <Reading $line={32}>cd/m²: 123.34</Reading>
              </Stats>
              <ReadingsTable />
            </BottomRow>
          </Workspace>

          <Footer>
            <PatchArea>
              <PatchRow>
                {patches.map(([name, color, wrap]) => (
                  <Patch key={name}>
                    <Chip $color={color} $short={wrap} />
                    <PatchName $wrap={wrap}>{name}</PatchName>
                  </Patch>
                ))}
              </PatchRow>
              <ScrollBar height={12} thumb={58} end={9} />
            </PatchArea>
            <PatternBox>
              <PatternUp aria-label="Pattern menu">
                <Arrow dir="up" color="#2a2a2a" />
              </PatternUp>
              <Pattern aria-label="Pattern">
                <PatternFace>
                  <PatternSquare />
                </PatternFace>
              </Pattern>
            </PatternBox>
            <Transport>
              <Key aria-label="Stop">
                <Disc $bg={keyDisc}>
                  <Glyph d="M3.8 3.8H10.2V10.2H3.8Z" fill="#222" />
                </Disc>
              </Key>
              <Key aria-label="Play">
                <Disc $bg={keyDisc}>
                  <Glyph d="M4 2.5L11 7L4 11.5Z" fill="#222" />
                </Disc>
              </Key>
              <Key $dim aria-label="Range">
                <Disc $bg="#5c5c5c">
                  <Glyph d="M4 1.5H1.2V12.5H4M10 1.5H12.8V12.5H10M3.4 7H4.8M6.3 7H7.7M9.2 7H10.6" />
                </Disc>
              </Key>
              <Key aria-label="Continuous">
                <Disc $bg={keyDisc}>
                  <Glyph d="M7 7C5.5 4.8 4.5 4.5 3.6 4.5A2.5 2.5 0 0 0 3.6 9.5C4.5 9.5 5.5 9.2 7 7C8.5 4.8 9.5 4.5 10.4 4.5A2.5 2.5 0 0 1 10.4 9.5C9.5 9.5 8.5 9.2 7 7Z" />
                </Disc>
              </Key>
              <Key $off aria-label="Refresh">
                <Disc $bg="#3e3e3e">
                  <Glyph
                    color="#161616"
                    d="M2 6.5A5 5 0 0 1 11 4M11.8 1.5V4.8H8.4M12 7.5A5 5 0 0 1 3 10M2.2 12.5V9.2H5.6"
                  />
                </Disc>
              </Key>
              <Key $off aria-label="Record">
                <Disc $bg="#2a2a2a" />
              </Key>
              <PageKey>
                <Disc $bg={keyDisc}>
                  <Glyph d="M7 2L3 7L7 12M11.5 2L7.5 7L11.5 12" />
                </Disc>
                Back
              </PageKey>
              <PageKey>
                Next
                <Disc $bg={keyDisc}>
                  <Glyph d="M2.5 2L6.5 7L2.5 12M7 2L11 7L7 12" />
                </Disc>
              </PageKey>
            </Transport>
          </Footer>
        </Main>
      </Body>
    </Window>
  );
}
